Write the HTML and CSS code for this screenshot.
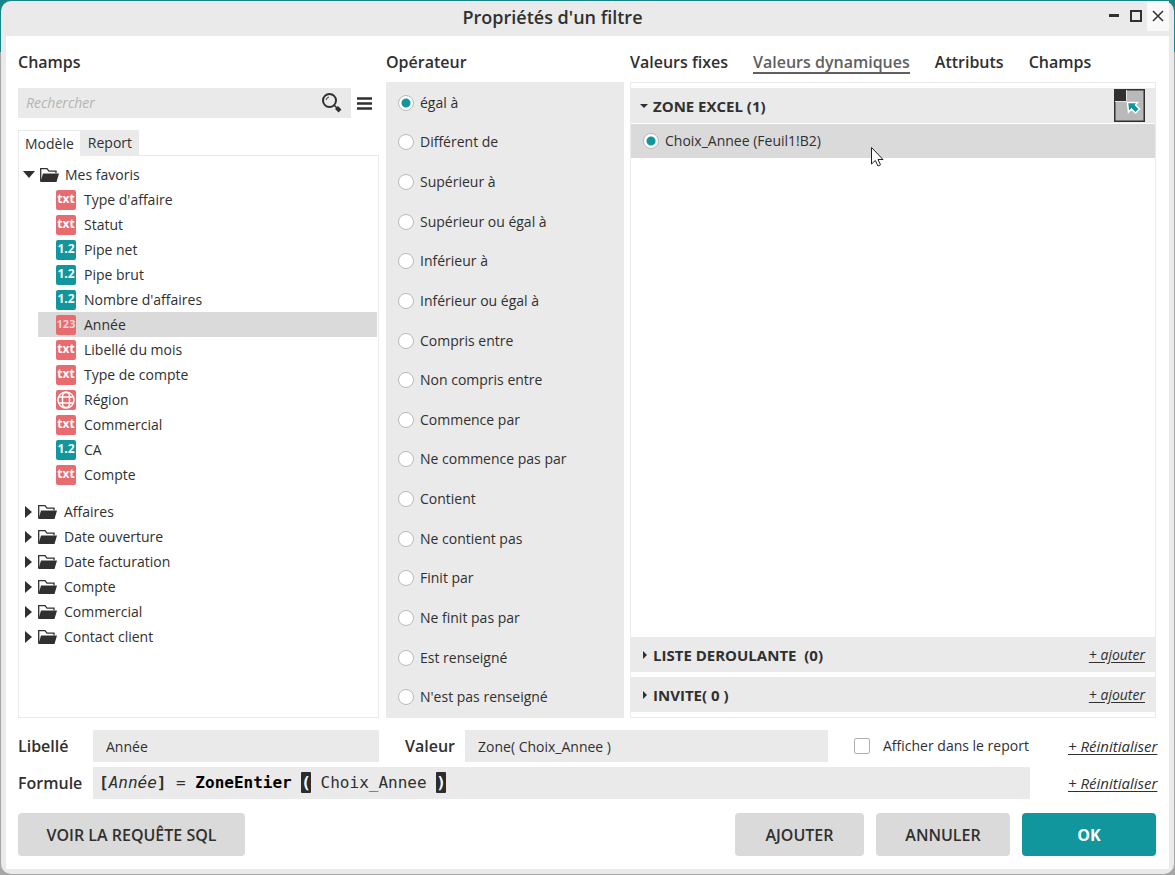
FILE: index.html
```html
<!DOCTYPE html>
<html lang="fr">
<head>
    <meta charset="UTF-8">
    <meta name="viewport" content="width=device-width, initial-scale=1.0">
    <title>Propriétés d'un filtre</title>
    <link rel="stylesheet" href="styles.css">
</head>
<body>
    <svg class="symbols" aria-hidden="true">
        <symbol id="folder" viewBox="0 0 19 14">
            <path d="M.7 13.500V.7h6.300l2 2.500h7v2" fill="none" stroke="#303030" stroke-width="1.3"/>
            <path d="M3 5.500h16l-2.500 8.500H.5z" fill="#303030"/>
        </symbol>
        <symbol id="globe" viewBox="0 0 20 20">
            <g fill="none" stroke="#fff" stroke-width="1.500">
                <circle cx="10" cy="10" r="8"/>
                <rect x="6.500" y="2.500" width="7" height="15" rx="3.500"/>
                <path d="M2.500 7h15M2.500 13h15"/>
            </g>
        </symbol>
    </svg>

    <div class="window">
        <header class="title-bar">
            <h1>Propriétés d'un filtre</h1>
            <div class="window-buttons">
                <button aria-label="Réduire"><svg width="12" height="12" viewBox="0 0 12 12"><path d="M1 5.500h10" stroke="#303030" stroke-width="3"/></svg></button>
                <button aria-label="Agrandir"><svg width="12" height="12" viewBox="0 0 12 12"><path d="M1 1h10v10H1z" fill="none" stroke="#303030" stroke-width="2"/></svg></button>
                <button class="close-btn" aria-label="Fermer"><svg width="12" height="12" viewBox="0 0 12 12"><path d="M1 1l10 10M11 1L1 11" stroke="#303030" stroke-width="1.500"/></svg></button>
            </div>
        </header>

        <main class="content">
            <div class="columns">
                <section class="column fields">
                    <h2>Champs</h2>
                    <div class="search-row">
                        <div class="search-box">
                            <input type="text" placeholder="Rechercher" aria-label="Rechercher">
                            <svg width="22" height="22" viewBox="0 0 22 22">
                                <circle cx="8.500" cy="8.500" r="6.500" fill="none" stroke="#303030" stroke-width="2"/>
                                <path d="M5 8a4 4 0 0 1 3-3" fill="none" stroke="#303030"/>
                                <path d="M13 13l3 3" stroke="#303030" stroke-width="1.500"/>
                                <path d="M15.500 15.500l3.500 3.500" stroke="#303030" stroke-width="4"/>
                            </svg>
                        </div>
                        <button class="menu-btn" aria-label="Menu"><svg width="15" height="13" viewBox="0 0 15 13"><path d="M0 1.500h15M0 6.500h15M0 11.500h15" stroke="#303030" stroke-width="2.500"/></svg></button>
                    </div>
                    <div class="tabs">
                        <button class="tab active">Modèle</button>
                        <button class="tab">Report</button>
                    </div>
                    <div class="tree">
                        <details class="favorites" open>
                            <summary><span class="arrow"></span><svg class="folder"><use href="#folder"/></svg>Mes favoris</summary>
                            <ul>
                                <li><button><span class="type txt">txt</span>Type d'affaire</button></li>
                                <li><button><span class="type txt">txt</span>Statut</button></li>
                                <li><button><span class="type num">1.2</span>Pipe net</button></li>
                                <li><button><span class="type num">1.2</span>Pipe brut</button></li>
                                <li><button><span class="type num">1.2</span>Nombre d'affaires</button></li>
                                <li class="selected"><button><span class="type int">123</span>Année</button></li>
                                <li><button><span class="type txt">txt</span>Libellé du mois</button></li>
                                <li><button><span class="type txt">txt</span>Type de compte</button></li>
                                <li><button><span class="type txt"><svg width="20" height="20"><use href="#globe"/></svg></span>Région</button></li>
                                <li><button><span class="type txt">txt</span>Commercial</button></li>
                                <li><button><span class="type num">1.2</span>CA</button></li>
                                <li><button><span class="type txt">txt</span>Compte</button></li>
                            </ul>
                        </details>
                        <details><summary><span class="arrow"></span><svg class="folder"><use href="#folder"/></svg>Affaires</summary></details>
                        <details><summary><span class="arrow"></span><svg class="folder"><use href="#folder"/></svg>Date ouverture</summary></details>
                        <details><summary><span class="arrow"></span><svg class="folder"><use href="#folder"/></svg>Date facturation</summary></details>
                        <details><summary><span class="arrow"></span><svg class="folder"><use href="#folder"/></svg>Compte</summary></details>
                        <details><summary><span class="arrow"></span><svg class="folder"><use href="#folder"/></svg>Commercial</summary></details>
                        <details><summary><span class="arrow"></span><svg class="folder"><use href="#folder"/></svg>Contact client</summary></details>
                    </div>
                </section>

                <section class="column">
                    <h2>Opérateur</h2>
                    <div class="operators">
                        <label><input type="radio" name="operator" checked>égal à</label>
                        <label><input type="radio" name="operator">Différent de</label>
                        <label><input type="radio" name="operator">Supérieur à</label>
                        <label><input type="radio" name="operator">Supérieur ou égal à</label>
                        <label><input type="radio" name="operator">Inférieur à</label>
                        <label><input type="radio" name="operator">Inférieur ou égal à</label>
                        <label><input type="radio" name="operator">Compris entre</label>
                        <label><input type="radio" name="operator">Non compris entre</label>
                        <label><input type="radio" name="operator">Commence par</label>
                        <label><input type="radio" name="operator">Ne commence pas par</label>
                        <label><input type="radio" name="operator">Contient</label>
                        <label><input type="radio" name="operator">Ne contient pas</label>
                        <label><input type="radio" name="operator">Finit par</label>
                        <label><input type="radio" name="operator">Ne finit pas par</label>
                        <label><input type="radio" name="operator">Est renseigné</label>
                        <label><input type="radio" name="operator">N'est pas renseigné</label>
                    </div>
                </section>

                <section class="column">
                    <nav class="value-tabs">
                        <button>Valeurs fixes</button>
                        <button class="active">Valeurs dynamiques</button>
                        <button>Attributs</button>
                        <button>Champs</button>
                    </nav>
                    <div class="values">
                        <div class="group-header">
                            <button class="group-toggle open"><span class="arrow"></span>ZONE EXCEL (1)</button>
                            <button class="pick-btn" aria-label="Choisir une cellule">
                                <svg width="31" height="33" viewBox="0 0 31 33">
                                    <path d="M.75.75h29.500v31.500H.75z" fill="#b9b9b9" stroke="#303030" stroke-width="1.500"/>
                                    <path d="M0 0h12v12H0z" fill="#303030"/>
                                    <path d="M12.500 1v11.500H1" fill="none" stroke="#e4e4e4"/>
                                    <path d="M13.500 13.500h10l-2 2.500 4 4-4 4-4-4-3 3z" fill="#11969e" stroke="#fff" stroke-width="1.500"/>
                                </svg>
                            </button>
                        </div>
                        <div class="group-list">
                            <label class="value-item">
                                <input type="radio" name="zone" checked>Choix_Annee (Feuil1!B2)
                                <svg class="cursor" width="13" height="20" viewBox="0 0 13 20"><path d="M.5.5v16.500l3.800-3.500 2.700 5.500 2.500-1.200L7 12.500h5z" fill="#fff" stroke="#202020"/></svg>
                            </label>
                        </div>
                        <div class="group-header">
                            <button class="group-toggle"><span class="arrow"></span>LISTE DEROULANTE&nbsp; (0)</button>
                            <a href="#">+ ajouter</a>
                        </div>
                        <div class="group-header">
                            <button class="group-toggle"><span class="arrow"></span>INVITE( 0 )</button>
                            <a href="#">+ ajouter</a>
                        </div>
                    </div>
                </section>
            </div>

            <div class="form-row">
                <label class="form-label" for="libelle">Libellé</label>
                <input class="field libelle" id="libelle" type="text" value="Année">
                <label class="form-label valeur-label" for="valeur">Valeur</label>
                <input class="field valeur" id="valeur" type="text" value="Zone( Choix_Annee )">
                <label class="show-option"><input type="checkbox">Afficher dans le report</label>
                <a class="reset" href="#">+ Réinitialiser</a>
            </div>
            <div class="form-row">
                <span class="form-label" id="formule">Formule</span>
                <div class="formula" role="textbox" aria-labelledby="formule"><b>[</b><i>Année</i><b>]</b> = <strong>ZoneEntier</strong> <mark>(</mark> Choix_Annee <mark>)</mark></div>
                <a class="reset" href="#">+ Réinitialiser</a>
            </div>

            <footer class="actions">
                <button class="btn sql-btn">VOIR LA REQUÊTE SQL</button>
                <button class="btn add-btn">AJOUTER</button>
                <button class="btn">ANNULER</button>
                <button class="btn primary">OK</button>
            </footer>
        </main>
    </div>
</body>
</html>
```
FILE: styles.css
```css
:root {
    --teal: #11969e;
    --red: #e76b6f;
    --text: #303030;
    --panel: #eaeaea;
    --selected: #dadada;
}

* {
    margin: 0;
    padding: 0;
    box-sizing: border-box;
}

body {
    height: 100vh;
    padding: 1px;
    background: linear-gradient(#16868a 52px, #a6a6a6 52px);
    color: var(--text);
    font-family: "Open Sans", "Noto Sans", sans-serif;
    font-size: 14px;
    line-height: 20px;
}

button,
input {
    font: inherit;
    color: inherit;
    background: none;
    border: none;
}

button {
    cursor: pointer;
}

a {
    color: inherit;
    font-style: italic;
    text-underline-offset: 2px;
}

svg {
    display: block;
    flex: none;
}

.symbols {
    display: none;
}

.window {
    display: flex;
    flex-direction: column;
    height: 100%;
    padding: 0 5px 5px;
    background: var(--panel);
    border-radius: 10px;
}

.title-bar {
    display: grid;
    grid-template-columns: 1fr auto 1fr;
    height: 35px;
}

.title-bar h1 {
    grid-column: 2;
    font-size: 18px;
    font-weight: 600;
    line-height: 32px;
    padding-right: 70px;
}

.window-buttons {
    display: flex;
    justify-content: flex-end;
}

.window-buttons button {
    display: grid;
    place-items: center;
    width: 22px;
    height: 30px;
}

.window-buttons .close-btn {
    background: #f9f9f9;
}

.content {
    flex: 1;
    display: flex;
    flex-direction: column;
    min-height: 0;
    padding: 0 13px 13px 12px;
    background: #fff;
}

.columns {
    flex: 1;
    display: grid;
    grid-template-columns: 362fr 238fr 526fr;
    gap: 6px;
    min-height: 0;
    margin-bottom: 12px;
}

.column {
    display: flex;
    flex-direction: column;
    min-width: 0;
}

h2,
.value-tabs {
    height: 46px;
    padding-top: 14px;
    font-size: 16px;
    font-weight: 600;
    line-height: 24px;
}

/* Fields */

.fields {
    padding-right: 1px;
}

.search-row {
    display: flex;
    gap: 6px;
    height: 30px;
    margin: 6px 7px 12px 0;
}

.search-box {
    flex: 1;
    display: flex;
    align-items: center;
    padding: 0 8px;
    background: var(--panel);
}

.search-box input {
    flex: 1;
    min-width: 0;
}

.search-box input::placeholder {
    color: #b4b4b4;
    font-style: italic;
}

.tabs {
    display: flex;
}

.tab {
    height: 25px;
    padding: 0 7px;
    background: var(--panel);
}

.tab.active {
    position: relative;
    height: 26px;
    padding: 0 6px;
    margin-bottom: -1px;
    background: #fff;
    border: 1px solid var(--panel);
    border-bottom: none;
}

.tree {
    flex: 1;
    padding: 6px 1px;
    border: 1px solid var(--panel);
}

.tree summary {
    display: flex;
    align-items: center;
    height: 25px;
    padding-left: 5px;
    list-style: none;
    cursor: pointer;
}

.tree .folder {
    width: 19px;
    height: 14px;
    margin: 0 7px 0 6px;
}

.tree .arrow {
    border-style: solid;
    border-width: 6px 0 6px 7px;
    border-color: transparent transparent transparent var(--text);
}

.tree details[open] .arrow {
    border-width: 7px 6px 0;
    border-color: var(--text) transparent transparent;
}

.tree details[open] summary {
    padding-left: 3px;
}

.tree details[open] .folder {
    margin: 0 6px 0 5px;
}

.favorites {
    margin-bottom: 12px;
}

.tree ul {
    margin-left: 18px;
    list-style: none;
}

.tree li button {
    display: flex;
    align-items: center;
    gap: 8px;
    width: 100%;
    height: 25px;
    padding-left: 18px;
}

.tree li.selected {
    background: var(--selected);
}

.type {
    width: 20px;
    height: 20px;
    border-radius: 2px;
    color: #fff;
    font-size: 12px;
    font-weight: 700;
    line-height: 18px;
    text-align: center;
}

.type.txt,
.type.int {
    background: var(--red);
}

.type.int {
    color: #e4d5d5;
    font-size: 11px;
}

.type.num {
    background: var(--teal);
}

/* Operators */

input[type="radio"] {
    appearance: none;
    flex: none;
    width: 16px;
    height: 16px;
    background: #fff;
    border: 1px solid #bababa;
    border-radius: 50%;
}

input[type="radio"]:checked {
    background: radial-gradient(circle, var(--teal) 4px, #fff 5px);
}

.operators {
    flex: 1;
    display: flex;
    flex-direction: column;
    padding: 1px 12px;
    background: var(--panel);
}

.operators label {
    flex: 1;
    display: flex;
    align-items: center;
    gap: 6px;
}

/* Values */

.value-tabs {
    display: flex;
    gap: 25px;
}

.value-tabs button {
    height: 24px;
    white-space: nowrap;
}

.value-tabs .active {
    color: #606060;
    border-bottom: 2px solid #606060;
}

.values {
    flex: 1;
    display: flex;
    flex-direction: column;
    gap: 5px;
    padding: 5px 0;
    border: 1px solid var(--panel);
}

.group-header {
    display: flex;
    align-items: center;
    justify-content: space-between;
    height: 35px;
    padding: 0 10px;
    background: var(--panel);
}

.group-toggle {
    display: flex;
    align-items: center;
    gap: 5px;
    font-size: 15px;
    font-weight: 700;
}

.group-toggle .arrow {
    margin: 0 1px 0 2px;
    border-style: solid;
    border-width: 4px 0 4px 4px;
    border-color: transparent transparent transparent var(--text);
}

.group-toggle.open .arrow {
    margin: 0 0 0 -1px;
    border-width: 4px 4px 0;
    border-color: var(--text) transparent transparent;
}

.group-list {
    flex: 1;
    margin-top: -4px;
}

.value-item {
    position: relative;
    display: flex;
    align-items: center;
    gap: 6px;
    height: 34px;
    padding-left: 12px;
    background: var(--selected);
}

.cursor {
    position: absolute;
    top: 23px;
    left: 240px;
}

/* Bottom form */

.form-row {
    display: flex;
    align-items: center;
    height: 32px;
    margin-bottom: 5px;
}

.form-label {
    width: 75px;
    font-size: 16px;
    font-weight: 600;
}

.valeur-label {
    width: 60px;
    margin-left: 26px;
}

.field {
    min-width: 0;
    height: 32px;
    padding: 0 13px;
    background: var(--panel);
}

.libelle {
    flex: 286 1 286px;
}

.valeur {
    flex: 363 1 363px;
}

.show-option {
    display: flex;
    align-items: center;
    gap: 13px;
    width: 176px;
    margin-left: 26px;
    white-space: nowrap;
}

.show-option input {
    appearance: none;
    width: 16px;
    height: 16px;
    background: #fff;
    border: 1px solid #b0b0b0;
    border-radius: 2px;
}

.reset {
    width: 88px;
    margin-left: 38px;
    font-size: 15px;
    white-space: nowrap;
}

.formula {
    flex: 1;
    height: 32px;
    padding: 0 6px;
    background: var(--panel);
    font-family: "DejaVu Sans Mono", monospace;
    font-size: 16px;
    line-height: 32px;
    white-space: nowrap;
}

.formula strong {
    color: #000;
}

.formula mark {
    padding: 1px 0;
    background: #2b2b30;
    border-radius: 1px;
    color: #fff;
    font-weight: 700;
}

.actions {
    display: flex;
    gap: 12px;
    margin-top: 9px;
}

.btn {
    width: 134px;
    height: 43px;
    background: var(--selected);
    border-radius: 4px;
    font-size: 16px;
    font-weight: 600;
}

.sql-btn {
    width: 227px;
    margin-right: auto;
}

.add-btn {
    width: 129px;
}

.btn.primary {
    background: var(--teal);
    color: #fff;
    font-weight: 700;
}
```
